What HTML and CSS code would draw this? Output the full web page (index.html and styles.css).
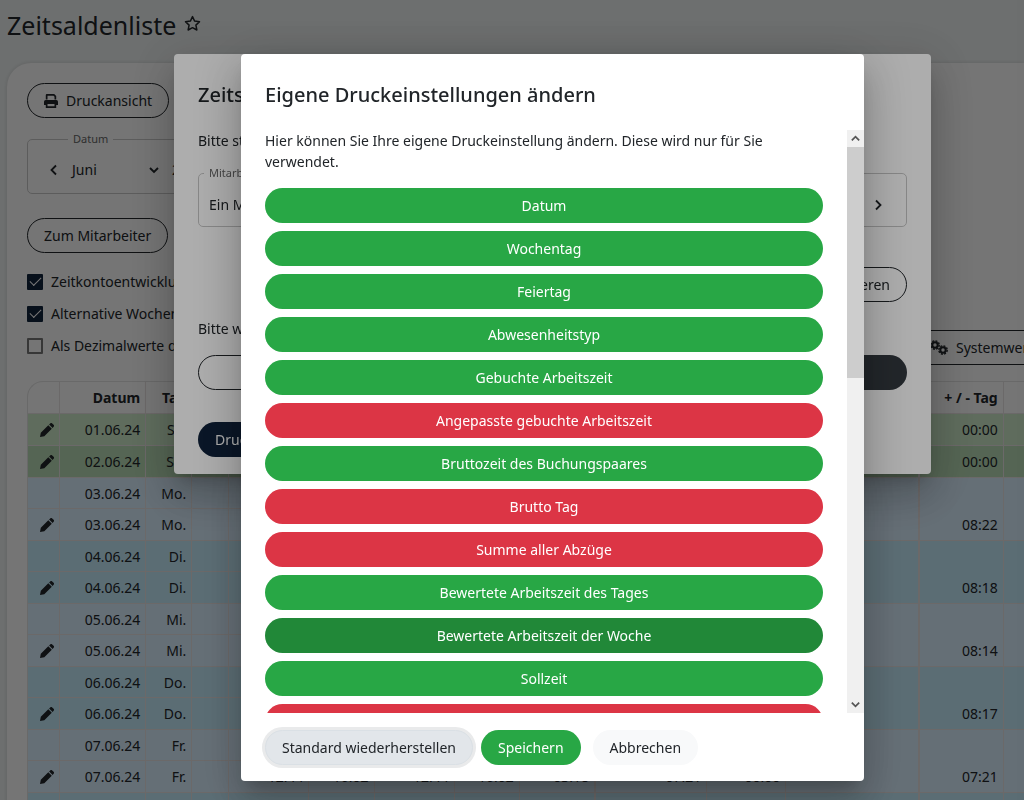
FILE: index.html
```html
<!DOCTYPE html>
<html lang="de">
<head>
  <meta charset="UTF-8">
  <meta name="viewport" content="width=device-width, initial-scale=1.0">
  <title>Zeitsaldenliste</title>
  <link rel="stylesheet" href="styles.css">
</head>
<body>
  <svg class="sprite" aria-hidden="true">
    <symbol id="pencil" viewBox="0 0 14 14"><path d="M0 14l.8-4.300L8.300 2.200l3.500 3.500L4.300 13.200zM9.100 1.400L10.200.4a1.400 1.400 0 0 1 2 0l1.400 1.400a1.400 1.400 0 0 1 0 2L12.600 4.900z"/></symbol>
    <symbol id="left" viewBox="0 0 12 12"><path d="M8 1.500L3.500 6L8 10.500" fill="none" stroke="currentColor" stroke-width="1.800"/></symbol>
    <symbol id="right" viewBox="0 0 12 12"><path d="M4 1.500L8.500 6L4 10.500" fill="none" stroke="currentColor" stroke-width="1.800"/></symbol>
    <symbol id="down" viewBox="0 0 12 12"><path d="M2 4L6 8L10 4" fill="none" stroke="currentColor" stroke-width="1.900"/></symbol>
    <symbol id="up" viewBox="0 0 12 12"><path d="M2 8L6 4L10 8" fill="none" stroke="currentColor" stroke-width="1.900"/></symbol>
    <symbol id="cog" viewBox="0 0 10 10"><circle cx="5" cy="5" r="2.700" fill="none" stroke="currentColor" stroke-width="2"/><circle cx="5" cy="5" r="4.200" fill="none" stroke="currentColor" stroke-width="1.400" stroke-dasharray="2 1.300"/></symbol>
  </svg>

  <div class="page">
    <header class="page-header">
      <h1>Zeitsaldenliste</h1>
      <button class="icon-btn" aria-label="Favorit">
        <svg class="star" viewBox="0 0 16 16"><path d="M8 1.500l2 4.200 4.600.6-3.400 3.200.9 4.600L8 11.900l-4.100 2.200.9-4.600L1.400 6.300 6 5.700z" fill="none" stroke="currentColor" stroke-width="1.400" stroke-linejoin="round"/></svg>
      </button>
    </header>

    <main class="card">
      <button class="btn btn-outline">
        <svg class="icon-print" viewBox="0 0 14 14"><path fill-rule="evenodd" d="M1.800 5.500V1Q1.800 0 2.800 0H10.200L12.200 2V5.500H10.500V2.700L9.500 1.700H3.500V5.500zM1.700 6H12.300Q14 6 14 7.700V11H12.200V14H1.800V11H0V7.700Q0 6 1.700 6zM3.500 10V12.300H10.500V10z"/></svg>Druckansicht
      </button>
      <fieldset class="field field-date">
        <legend>Datum</legend>
        <button class="icon-btn" aria-label="Zurück"><svg class="chev"><use href="#left"/></svg></button>
        <button class="pick pick-month">Juni <svg class="chev"><use href="#down"/></svg></button>
        <button class="pick">2024</button>
      </fieldset>
      <button class="btn btn-outline">Zum Mitarbeiter</button>

      <div class="checks">
        <label class="check"><input type="checkbox" checked>Zeitkontoentwicklung</label>
        <label class="check"><input type="checkbox" checked>Alternative Wochen</label>
        <label class="check"><input type="checkbox">Als Dezimalwerte darstellen</label>
      </div>
      <div class="toolbar">
        <button class="btn btn-outline btn-system">
          <svg class="icon-cogs" viewBox="0 0 18 15"><use href="#cog" x="0" y="0" width="10" height="10"/><use href="#cog" x="8" y="5" width="10" height="10"/></svg>Systemwerte
        </button>
      </div>

      <table class="times">
        <colgroup>
          <col class="c-edit"><col class="c-date"><col class="c-day"><col class="c-flag">
          <col class="c-from"><col class="c-to"><col class="c-from"><col class="c-to">
          <col class="c-sum"><col class="c-total"><col class="c-break"><col class="c-wide">
          <col class="c-diff"><col class="c-from">
        </colgroup>
        <thead>
          <tr><th></th><th>Datum</th><th>Tag</th><th></th><th></th><th></th><th></th><th></th><th></th><th></th><th></th><th></th><th>+ / - Tag</th><th></th></tr>
        </thead>
        <tbody>
          <tr class="sat"><td><svg class="pencil"><use href="#pencil"/></svg></td><td>01.06.24</td><td>Sa.</td><td></td><td></td><td></td><td></td><td></td><td></td><td></td><td></td><td></td><td>00:00</td><td></td></tr>
          <tr class="sun"><td><svg class="pencil"><use href="#pencil"/></svg></td><td>02.06.24</td><td>So.</td><td></td><td></td><td></td><td></td><td></td><td></td><td></td><td></td><td></td><td>00:00</td><td></td></tr>
        </tbody>
        <tbody class="day">
          <tr><td></td><td>03.06.24</td><td>Mo.</td><td></td><td></td><td></td><td></td><td></td><td></td><td rowspan="2"></td><td rowspan="2"></td><td rowspan="2"></td><td rowspan="2">08:22</td><td rowspan="2"></td></tr>
          <tr><td><svg class="pencil"><use href="#pencil"/></svg></td><td>03.06.24</td><td>Mo.</td><td></td><td></td><td></td><td></td><td></td><td></td></tr>
        </tbody>
        <tbody class="day alt">
          <tr><td></td><td>04.06.24</td><td>Di.</td><td></td><td></td><td></td><td></td><td></td><td></td><td rowspan="2"></td><td rowspan="2"></td><td rowspan="2"></td><td rowspan="2">08:18</td><td rowspan="2"></td></tr>
          <tr><td><svg class="pencil"><use href="#pencil"/></svg></td><td>04.06.24</td><td>Di.</td><td></td><td></td><td></td><td></td><td></td><td></td></tr>
        </tbody>
        <tbody class="day">
          <tr><td></td><td>05.06.24</td><td>Mi.</td><td></td><td></td><td></td><td></td><td></td><td></td><td rowspan="2"></td><td rowspan="2"></td><td rowspan="2"></td><td rowspan="2">08:14</td><td rowspan="2"></td></tr>
          <tr><td><svg class="pencil"><use href="#pencil"/></svg></td><td>05.06.24</td><td>Mi.</td><td></td><td></td><td></td><td></td><td></td><td></td></tr>
        </tbody>
        <tbody class="day alt">
          <tr><td></td><td>06.06.24</td><td>Do.</td><td></td><td></td><td></td><td></td><td></td><td></td><td rowspan="2"></td><td rowspan="2"></td><td rowspan="2"></td><td rowspan="2">08:17</td><td rowspan="2"></td></tr>
          <tr><td><svg class="pencil"><use href="#pencil"/></svg></td><td>06.06.24</td><td>Do.</td><td></td><td></td><td></td><td></td><td></td><td></td></tr>
        </tbody>
        <tbody class="day">
          <tr><td></td><td>07.06.24</td><td>Fr.</td><td></td><td></td><td></td><td></td><td></td><td></td><td rowspan="2">07:21</td><td rowspan="2">00:00</td><td rowspan="2"></td><td rowspan="2">07:21</td><td rowspan="2"></td></tr>
          <tr><td><svg class="pencil"><use href="#pencil"/></svg></td><td>07.06.24</td><td>Fr.</td><td></td><td>12:44</td><td>16:02</td><td>12:44</td><td>16:02</td><td>03:18</td></tr>
        </tbody>
        <tbody class="alt">
          <tr><td></td><td></td><td></td><td></td><td></td><td></td><td></td><td></td><td></td><td></td><td></td><td></td><td></td><td></td></tr>
        </tbody>
      </table>
    </main>
  </div>

  <div class="overlay">
    <section class="dialog dialog-print">
      <h2>Zeitsaldenliste</h2>
      <p>Bitte stellen Sie</p>
      <fieldset class="field field-staff">
        <legend>Mitarbeiter</legend>
        <button class="pick">Ein Mitarbeiter</button>
        <button class="icon-btn" aria-label="Weiter"><svg class="chev"><use href="#right"/></svg></button>
      </fieldset>
      <div class="row-end"><button class="btn btn-outline">Konfigurieren</button></div>
      <p>Bitte wählen Sie</p>
      <div class="split">
        <button class="btn btn-outline" aria-label="Hochformat"></button>
        <button class="btn btn-dark" aria-label="Querformat"></button>
      </div>
      <button class="btn btn-navy">Drucken</button>
    </section>
  </div>

  <div class="overlay">
    <section class="dialog dialog-settings" role="dialog" aria-labelledby="dlgTitle">
      <h2 id="dlgTitle">Eigene Druckeinstellungen ändern</h2>
      <div class="scroll">
        <div class="scroll-body">
          <p>Hier können Sie Ihre eigene Druckeinstellung ändern. Diese wird nur für Sie verwendet.</p>
          <div class="columns">
            <button class="btn btn-on">Datum</button>
            <button class="btn btn-on">Wochentag</button>
            <button class="btn btn-on">Feiertag</button>
            <button class="btn btn-on">Abwesenheitstyp</button>
            <button class="btn btn-on">Gebuchte Arbeitszeit</button>
            <button class="btn btn-off">Angepasste gebuchte Arbeitszeit</button>
            <button class="btn btn-on">Bruttozeit des Buchungspaares</button>
            <button class="btn btn-off">Brutto Tag</button>
            <button class="btn btn-off">Summe aller Abzüge</button>
            <button class="btn btn-on">Bewertete Arbeitszeit des Tages</button>
            <button class="btn btn-on active">Bewertete Arbeitszeit der Woche</button>
            <button class="btn btn-on">Sollzeit</button>
            <button class="btn btn-off" aria-label="Saldo"></button>
          </div>
        </div>
        <div class="scrollbar" aria-hidden="true">
          <svg class="arrow"><use href="#up"/></svg>
          <div class="track"><div class="thumb"></div></div>
          <svg class="arrow"><use href="#down"/></svg>
        </div>
      </div>
      <footer class="actions">
        <button class="btn btn-light focused">Standard wiederherstellen</button>
        <button class="btn btn-on">Speichern</button>
        <button class="btn btn-light btn-cancel">Abbrechen</button>
      </footer>
    </section>
  </div>
</body>
</html>
```
FILE: styles.css
```css
* { box-sizing: border-box; }
body { margin: 0; height: 100vh; overflow: hidden; font-family: "Noto Sans", sans-serif; font-size: 14px; line-height: 21px; color: #212529; background: #ecf0f0; }
h1, h2, p, fieldset, legend { margin: 0; padding: 0; }
button { font: inherit; color: inherit; cursor: pointer; }
.sprite { display: none; }
svg { fill: currentColor; flex: none; }

/* page behind the dialogs */
.page { height: 100vh; overflow: hidden; }
.page-header { display: flex; align-items: center; gap: 8px; height: 63px; padding: 0 7px 14px; }
h1 { font-size: 25px; font-weight: 400; line-height: 32px; }
.icon-btn { display: flex; padding: 0; border: 0; background: none; }
.star { width: 17px; height: 17px; margin-bottom: 2px; }
.card { margin-left: 7px; padding: 20px 0 0 20px; min-height: 100%; background: #fcfcfc; border-radius: 24px 0 0 0; box-shadow: 0 0 4px #0002; }

.btn { display: inline-flex; align-items: center; justify-content: center; min-height: 35px; padding: 6px 16px; border: 1px solid transparent; border-radius: 18px; white-space: nowrap; }
.btn-outline { background: none; border-color: #212529; }
.btn-dark { background: #343a40; }
.btn-navy { background: #11233b; color: #fff; }
.btn-on { background: #28a745; color: #fff; }
.btn-on.active { background: #218838; }
.btn-off { background: #dc3545; color: #fff; }
.btn-light { background: #f8f9fa; }
.btn-light.focused { background: #e2e6ea; border-color: #dae0e5; box-shadow: 0 0 0 3px #e9eaeb; }
.icon-print { width: 14px; height: 14px; margin-right: 8px; }
.icon-cogs { width: 18px; height: 15px; margin-right: 8px; }
.chev { width: 12px; height: 12px; }

.field { display: flex; align-items: center; border: 1px solid #c8c8c8; border-radius: 5px; }
.field legend { padding: 0 5px; font-size: 11px; line-height: 14px; color: #666; }
.pick { display: flex; align-items: center; justify-content: space-between; padding: 0; border: 0; background: none; }
.field-date { width: 280px; height: 62px; margin: 14px 0 24px; padding: 0 20px; gap: 12px; }
.field-date legend { margin-left: 20px; }
.pick-month { width: 88px; }

.checks { display: grid; gap: 11px; margin-top: 18px; }
.check { display: flex; align-items: center; gap: 8px; }
.check input { appearance: none; display: grid; place-items: center; width: 16px; height: 16px; margin: 0; border: 2px solid #777; border-radius: 1px; }
.check input:checked { background: #11233b; border-color: #11233b; }
.check input:checked::before { content: ""; width: 10px; height: 5px; margin-bottom: 3px; border: solid #fff; border-width: 0 0 1px 1px; transform: rotate(-45deg); }
.toolbar { display: flex; margin: -26px 0 16px; padding-left: 886px; }

.times { table-layout: fixed; width: 1057px; border-collapse: separate; border-spacing: 0; border: solid #e2e2e2; border-width: 1px 0 0 1px; border-radius: 16px 0 0 0; }
.times th, .times td { height: 32px; padding: 5px; line-height: 21px; text-align: right; vertical-align: bottom; border: solid #e8e2e2; border-width: 0 1px 1px 0; }
.day tr:first-child td:not([rowspan]) { height: 31px; padding: 5px 5px 4px; }
.sat { background: #cdeac9; }
.sun { background: #b8dbb5; }
.day { background: #dbeffe; }
.alt { background: #c5ebfa; }
.pencil { display: block; width: 14px; height: 14px; margin: 0 0 3px 7px; }
.c-edit { width: 32px; }
.c-date { width: 86px; }
.c-day { width: 46px; }
.c-flag { width: 37px; }
.c-from { width: 80px; }
.c-to { width: 65px; }
.c-sum { width: 76px; }
.c-total { width: 111px; }
.c-break { width: 79px; }
.c-wide { width: 133px; }
.c-diff { width: 84px; }
.times td:nth-child(9), .times tr:not(.day tr:last-child) td:nth-child(12) { border-right-width: 2px; }

/* dialogs */
.overlay { position: fixed; inset: 0; display: flex; align-items: flex-start; justify-content: center; padding: 54px 0 19px 81px; background: rgba(0, 0, 0, .32); }
.dialog { display: flex; flex-direction: column; max-height: 100%; padding: 24px 24px 17px; background: #fff; border-radius: 4px; box-shadow: 0 11px 15px -7px rgba(0, 0, 0, .2), 0 24px 38px 3px rgba(0, 0, 0, .14), 0 9px 46px 8px rgba(0, 0, 0, .12); }
.dialog h2 { margin-bottom: 18px; font-size: 20px; font-weight: 500; line-height: 34px; }
.dialog-print { width: 757px; max-width: 100%; }
.field-staff { justify-content: space-between; height: 61px; margin: 15px 0 40px; padding: 14px 22px 0 10px; }
.field-staff legend { margin-left: -5px; }
.row-end { display: flex; justify-content: flex-end; margin-bottom: 16px; }
.split { display: grid; grid-template-columns: 1fr 1fr; gap: 8px; margin: 16px 0 32px; }
.btn-navy { align-self: flex-start; }

.dialog-settings { width: 623px; max-width: 100%; padding: 24px 0 0; }
.dialog-settings h2 { padding: 0 24px; }
.scroll { display: flex; flex: 1; min-height: 0; overflow: hidden; }
.scroll-body { flex: 1; min-width: 0; padding: 0 24px; overflow: hidden; }
.columns { display: grid; gap: 8px; margin-top: 16px; }
.scrollbar { display: flex; flex-direction: column; width: 17px; background: #f0f0f0; color: #555; }
.arrow { width: 17px; height: 17px; padding: 3px; }
.track { flex: 1; }
.thumb { height: 42%; background: #cdcdcd; }
.actions { display: flex; gap: 8px; padding: 17px 24px 16px; }
.btn-cancel { margin-left: 4px; }
```
